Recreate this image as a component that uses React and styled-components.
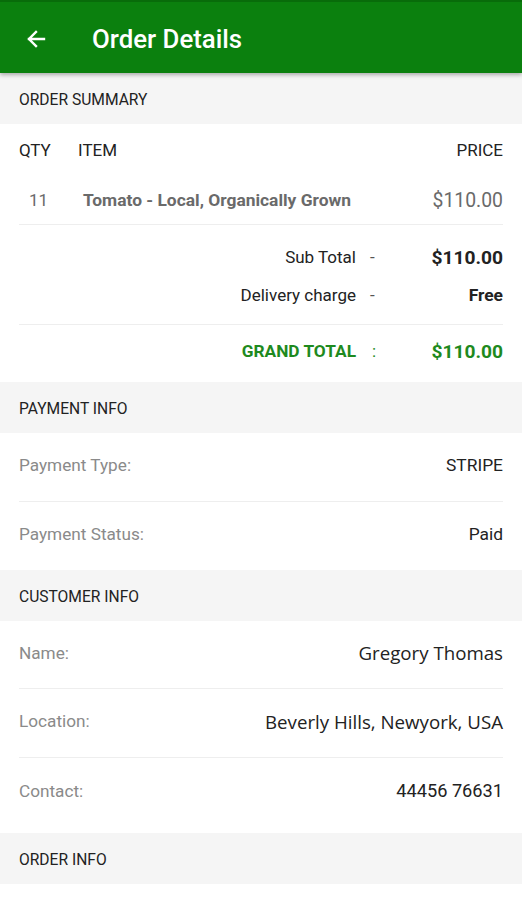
import React from "react";
import styled, { createGlobalStyle } from "styled-components";

const GlobalStyle = createGlobalStyle`
  body {
    margin: 0;
    background: #ffffff;
    font-family: Roboto, "Liberation Sans", sans-serif;
    color: #222;
  }
`;

const Page = styled.div`
  width: 522px;
  min-height: 900px;
  background: #fff;
`;

const AppBar = styled.div`
  height: 73px;
  background: #0b800e;
  border-top: 2px solid #086c0a;
  box-sizing: border-box;
  display: flex;
  align-items: center;
  padding: 2px 0 0 24px;
  gap: 44px;
  box-shadow: 0 2px 4px rgba(0, 0, 0, 0.3);
  position: relative;
  z-index: 1;
`;

const BarTitle = styled.span`
  color: #fff;
  font-size: 25.8px;
  font-weight: 500;
`;

const SectionHead = styled.div`
  height: 51px;
  background: #f5f5f5;
  display: flex;
  align-items: center;
  padding: 2px 0 0 19px;
  box-sizing: border-box;
  font-size: 15.6px;
  color: #222;
`;

const Body = styled.div`
  padding: 0 19px;
`;

const ColHead = styled.div`
  display: flex;
  align-items: center;
  height: 52px;
  font-size: 17px;
  color: #222;
`;

const QtyHead = styled.span`
  width: 59px;
`;

const Grow = styled.span`
  flex: 1;
`;

const ItemRow = styled.div`
  display: flex;
  align-items: center;
  height: 48px;
  border-bottom: 1px solid #eeeeee;
  color: #6a6a6a;
`;

const Qty = styled.span`
  width: 64px;
  padding-left: 10px;
  box-sizing: border-box;
  font-size: 17px;
`;

const ItemName = styled.span`
  flex: 1;
  font-weight: 700;
  font-size: 17.4px;
`;

const Price = styled.span`
  font-size: 19.4px;
`;

const Totals = styled.div`
  padding: 13px 0 10px;
  border-bottom: 1px solid #eeeeee;
`;

const TotalLine = styled.div`
  display: grid;
  grid-template-columns: 1fr 47px 100px;
  align-items: center;
  height: 38px;
  color: ${(p) => (p.green ? "#1e8a1e" : "#222")};
`;

const TotalLabel = styled.span`
  text-align: right;
  font-size: ${(p) => (p.bold ? 17.3 : 17)}px;
  font-weight: ${(p) => (p.bold ? 700 : 400)};
`;

const Sep = styled.span`
  font-size: 17px;
  color: ${(p) => (p.green ? "#1e8a1e" : "#555")};
  padding-left: ${(p) => (p.green ? 16 : 14)}px;
`;

const TotalValue = styled.span`
  text-align: right;
  font-weight: 700;
  font-size: ${(p) => p.size || 19.2}px;
`;

const GrandWrap = styled.div`
  padding: 7px 0 12px;
`;

const InfoRow = styled.div`
  display: flex;
  justify-content: space-between;
  align-items: center;
  box-sizing: border-box;
  height: ${(p) => p.h || 69}px;
  padding-bottom: ${(p) => p.lift || 4}px;
  border-bottom: ${(p) => (p.last ? "none" : "1px solid #eeeeee")};
`;

const InfoLabel = styled.span`
  font-size: 17.2px;
  color: #8a8a8a;
`;

const InfoValue = styled.span`
  font-size: ${(p) => p.size || 17.4}px;
  color: #222;
  font-family: ${(p) =>
    p.alt ? '"Open Sans", "Noto Sans", sans-serif' : 'Roboto, "Liberation Sans", sans-serif'};
`;

const BackArrow = () => (
  <svg width="24" height="24" viewBox="0 0 24 24" fill="none">
    <path
      d="M20 12H5M12 5l-7 7 7 7"
      stroke="#fff"
      strokeWidth="2.4"
      strokeLinecap="square"
    />
  </svg>
);

export default function App() {
  return (
    <Page>
      <GlobalStyle />
      <AppBar>
        <BackArrow />
        <BarTitle>Order Details</BarTitle>
      </AppBar>

      <SectionHead>ORDER SUMMARY</SectionHead>
      <Body>
        <ColHead>
          <QtyHead>QTY</QtyHead>
          <Grow>ITEM</Grow>
          <span>PRICE</span>
        </ColHead>
        <ItemRow>
          <Qty>11</Qty>
          <ItemName>Tomato - Local, Organically Grown</ItemName>
          <Price>$110.00</Price>
        </ItemRow>
        <Totals>
          <TotalLine>
            <TotalLabel>Sub Total</TotalLabel>
            <Sep>-</Sep>
            <TotalValue>$110.00</TotalValue>
          </TotalLine>
          <TotalLine>
            <TotalLabel>Delivery charge</TotalLabel>
            <Sep>-</Sep>
            <TotalValue size={17.4}>Free</TotalValue>
          </TotalLine>
        </Totals>
        <GrandWrap>
          <TotalLine green>
            <TotalLabel bold>GRAND TOTAL</TotalLabel>
            <Sep green>:</Sep>
            <TotalValue>$110.00</TotalValue>
          </TotalLine>
        </GrandWrap>
      </Body>

      <SectionHead>PAYMENT INFO</SectionHead>
      <Body>
        <InfoRow h={69}>
          <InfoLabel>Payment Type:</InfoLabel>
          <InfoValue>STRIPE</InfoValue>
        </InfoRow>
        <InfoRow last h={68}>
          <InfoLabel>Payment Status:</InfoLabel>
          <InfoValue>Paid</InfoValue>
        </InfoRow>
      </Body>

      <SectionHead>CUSTOMER INFO</SectionHead>
      <Body>
        <InfoRow h={68}>
          <InfoLabel>Name:</InfoLabel>
          <InfoValue alt size={18.7}>Gregory Thomas</InfoValue>
        </InfoRow>
        <InfoRow h={69}>
          <InfoLabel>Location:</InfoLabel>
          <InfoValue alt size={18.7}>Beverly Hills, Newyork, USA</InfoValue>
        </InfoRow>
        <InfoRow last h={75} lift={10}>
          <InfoLabel>Contact:</InfoLabel>
          <InfoValue size={18.2}>44456 76631</InfoValue>
        </InfoRow>
      </Body>

      <SectionHead>ORDER INFO</SectionHead>
    </Page>
  );
}
